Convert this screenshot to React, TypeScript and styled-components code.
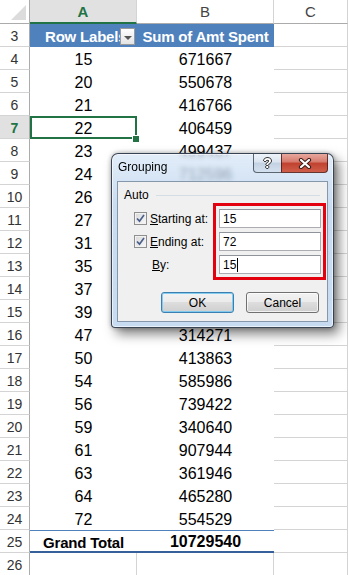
import React from "react";
import styled, { createGlobalStyle, css } from "styled-components";

const GlobalStyle = createGlobalStyle`
  html, body {
    margin: 0;
    padding: 0;
    background: #fff;
  }
  body {
    font-family: "Liberation Sans", Arial, sans-serif;
    overflow: hidden;
  }
  * {
    box-sizing: border-box;
  }
`;

const COLS = "30px 107px 137px 1fr";
const GRID = "#d4d4d4";
const HEAD_LINE = "#ababab";
const GREEN = "#217346";
const PIVOT_BLUE = "#4f81bd";

type Kind = "grid" | "pivot" | "head" | "total";

const Sheet = styled.div`
  position: relative;
  width: 348px;
  height: 575px;
  overflow: hidden;
  background: #fff;
`;

const HeaderRow = styled.div`
  display: grid;
  grid-template-columns: ${COLS};
  height: 24px;
`;

const Corner = styled.div`
  display: flex;
  align-items: flex-end;
  justify-content: flex-end;
  padding: 0 3px 3px 0;
  border-right: 1px solid ${HEAD_LINE};
  border-bottom: 1px solid ${HEAD_LINE};
  &::after {
    content: "";
    border-left: 15px solid transparent;
    border-bottom: 15px solid #dcdcdc;
  }
`;

const ColHead = styled.div<{ $active?: boolean }>`
  display: flex;
  align-items: center;
  justify-content: center;
  font-size: 15px;
  color: #444;
  border-right: 1px solid ${GRID};
  border-bottom: 1px solid ${HEAD_LINE};
  ${(p) =>
    p.$active &&
    css`
      background: #e1e1e1;
      color: ${GREEN};
      font-weight: bold;
      border-bottom: 2px solid ${GREEN};
    `}
`;

const Row = styled.div`
  display: grid;
  grid-template-columns: ${COLS};
  height: 23px;
`;

const RowNum = styled.div<{ $active?: boolean }>`
  display: flex;
  align-items: center;
  justify-content: center;
  padding-top: 1px;
  font-size: 14px;
  color: #333;
  border-right: 1px solid ${HEAD_LINE};
  border-bottom: 1px solid ${GRID};
  ${(p) =>
    p.$active &&
    css`
      background: #e1e1e1;
      color: ${GREEN};
      font-weight: bold;
    `}
`;

const Cell = styled.div<{ $kind?: Kind; $selected?: boolean }>`
  position: relative;
  display: flex;
  align-items: center;
  justify-content: center;
  padding-top: 2px;
  font-size: 16px;
  color: #000;
  white-space: nowrap;
  background: #fff;
  ${(p) =>
    p.$kind === "grid" &&
    css`
      border-right: 1px solid ${GRID};
      border-bottom: 1px solid ${GRID};
    `}
  ${(p) =>
    p.$kind === "head" &&
    css`
      background: ${PIVOT_BLUE};
      color: #fff;
      font-weight: bold;
      font-size: 15px;
      letter-spacing: -0.2px;
      overflow: hidden;
    `}
  ${(p) =>
    p.$kind === "total" &&
    css`
      font-weight: bold;
      border-top: 1px solid ${PIVOT_BLUE};
      border-bottom: 2px solid #36609a;
    `}
  ${(p) =>
    p.$selected &&
    css`
      z-index: 2;
      overflow: visible;
      &::after {
        content: "";
        position: absolute;
        inset: 0;
        border: 2px solid ${GREEN};
      }
      &::before {
        content: "";
        position: absolute;
        right: -3px;
        bottom: -4px;
        width: 6px;
        height: 6px;
        background: ${GREEN};
        border: 1px solid #fff;
        z-index: 3;
      }
    `}
`;

const TotalLabel = styled.span`
  font-size: 15px;
  letter-spacing: -0.2px;
`;

const HeadLabel = styled.span`
  flex: 1;
  padding-left: 15px;
  text-align: left;
`;

const FilterButton = styled.span`
  position: absolute;
  right: 2px;
  top: 4px;
  width: 15px;
  height: 17px;
  display: flex;
  align-items: center;
  justify-content: center;
  border: 1px solid #9a9a9a;
  background: linear-gradient(180deg, #ffffff, #e4e4e4);
  &::after {
    content: "";
    border-left: 4px solid transparent;
    border-right: 4px solid transparent;
    border-top: 4px solid #555;
    margin-top: 2px;
  }
`;

/* ---------- Grouping dialog ---------- */

const Dialog = styled.div`
  position: absolute;
  left: 111px;
  top: 153px;
  width: 223px;
  height: 175px;
  z-index: 10;
  display: flex;
  flex-direction: column;
  border: 1px solid rgba(30, 40, 55, 0.85);
  border-radius: 7px 7px 4px 4px;
  background: linear-gradient(
    180deg,
    rgba(214, 229, 246, 0.7),
    rgba(186, 210, 237, 0.78) 30%,
    rgba(190, 213, 239, 0.86)
  );
  backdrop-filter: blur(2.5px);
  box-shadow: inset 0 0 0 1px rgba(255, 255, 255, 0.6),
    5px 6px 12px rgba(0, 0, 0, 0.5), 0 0 5px rgba(0, 0, 0, 0.3);
  font-family: "Liberation Sans", Arial, sans-serif;
  font-size: 12px;
  color: #000;
`;

const TitleBar = styled.div`
  display: flex;
  align-items: flex-start;
  height: 27px;
`;

const Title = styled.span`
  flex: 1;
  padding-left: 6px;
  line-height: 27px;
`;

const CaptionButtons = styled.div`
  display: flex;
  margin-right: 5px;
`;

const HelpButton = styled.span`
  width: 28px;
  height: 19px;
  display: flex;
  align-items: center;
  justify-content: center;
  border: 1px solid rgba(45, 55, 70, 0.75);
  border-top: none;
  border-right: none;
  border-radius: 0 0 0 4px;
  background: linear-gradient(
    180deg,
    #eef3f9,
    #dae4ef 45%,
    #c3d2e3 50%,
    #d3e0ee
  );
  font-weight: bold;
  font-size: 14px;
  color: #fff;
  text-shadow: 1px 0 0 #333, -1px 0 0 #333, 0 1px 0 #333, 0 -1px 0 #333;
`;

const CloseButton = styled.span`
  width: 47px;
  height: 19px;
  display: flex;
  align-items: center;
  justify-content: center;
  border: 1px solid rgba(70, 25, 20, 0.8);
  border-top: none;
  border-radius: 0 0 4px 0;
  background: linear-gradient(
    180deg,
    #e7a79d,
    #d67a6c 45%,
    #c0412f 50%,
    #cf5e4a
  );
`;

const Client = styled.div`
  flex: 1;
  margin: 0 5px 5px;
  border: 1px solid #8797ab;
  background: #f0f0f0;
  display: flex;
  flex-direction: column;
`;

const GroupHead = styled.div`
  display: flex;
  align-items: center;
  height: 14px;
  margin-top: 6px;
  padding: 0 7px 0 6px;
  &::after {
    content: "";
    flex: 1;
    height: 1px;
    margin-left: 7px;
    background: #d5dde5;
  }
`;

const Fields = styled.div`
  position: relative;
  display: grid;
  row-gap: 4px;
  margin-top: 7px;
  padding: 0 6px 0 16px;
`;

const FieldRow = styled.div`
  display: grid;
  grid-template-columns: 13px 1fr 102px;
  align-items: center;
  height: 19px;
`;

const CheckBox = styled.span`
  width: 13px;
  height: 13px;
  display: flex;
  align-items: center;
  justify-content: center;
  border: 1px solid #8e8f8f;
  background: linear-gradient(135deg, #d8d8d8, #f8f8f8);
  box-shadow: inset 0 0 0 1px #f2f2f2;
`;

const FieldLabel = styled.span<{ $indent?: number }>`
  margin-left: ${(p) => p.$indent ?? 3}px;
  padding-top: 1px;
`;

const TextBox = styled.div`
  height: 19px;
  display: flex;
  align-items: center;
  padding-left: 3px;
  border: 1px solid #abadb3;
  border-top-color: #8f939a;
  background: #fff;
`;

const Caret = styled.span`
  display: inline-block;
  width: 1px;
  height: 14px;
  margin-left: 1px;
  background: #000;
`;

const Highlight = styled.div`
  position: absolute;
  left: 95px;
  top: -6px;
  width: 113px;
  height: 77px;
  border: 3px solid #e3000f;
  pointer-events: none;
`;

const ButtonRow = styled.div`
  display: flex;
  justify-content: flex-end;
  gap: 12px;
  margin-top: 18px;
  padding-right: 8px;
`;

const Button = styled.button<{ $default?: boolean }>`
  width: 73px;
  height: 21px;
  padding: 0;
  border: 1px solid ${(p) => (p.$default ? "#3c7fb1" : "#707070")};
  border-radius: 3px;
  background: linear-gradient(180deg, #f2f2f2, #ebebeb 50%, #dddddd 50%, #cfcfcf);
  box-shadow: inset 0 0 0 1px
    ${(p) => (p.$default ? "rgba(120, 200, 240, 0.9)" : "rgba(255, 255, 255, 0.7)")};
  font-family: "Liberation Sans", Arial, sans-serif;
  font-size: 12px;
  color: #000;
`;

const CheckMark = () => (
  <svg width="9" height="9" viewBox="0 0 9 9">
    <path
      d="M1 4.5 L3.5 7.2 L8 1"
      fill="none"
      stroke="#4a5f8c"
      strokeWidth="1.7"
    />
  </svg>
);

const CloseGlyph = () => (
  <svg width="14" height="11" viewBox="0 0 14 11">
    <path
      d="M3 2 L11 9 M11 2 L3 9"
      stroke="#3b1b16"
      strokeWidth="4.2"
      strokeLinecap="round"
    />
    <path
      d="M3 2 L11 9 M11 2 L3 9"
      stroke="#fff"
      strokeWidth="2.2"
      strokeLinecap="round"
    />
  </svg>
);

const data: [string, string][] = [
  ["15", "671667"],
  ["20", "550678"],
  ["21", "416766"],
  ["22", "406459"],
  ["23", "499437"],
  ["24", "712596"],
  ["26", "384215"],
  ["27", "455870"],
  ["31", "602341"],
  ["35", "398112"],
  ["37", "521743"],
  ["39", "425775"],
  ["47", "314271"],
  ["50", "413863"],
  ["54", "585986"],
  ["56", "739422"],
  ["59", "340640"],
  ["61", "907944"],
  ["63", "361946"],
  ["64", "465280"],
  ["72", "554529"],
];

const SELECTED_ROW = 7;

const App = () => {
  return (
    <Sheet>
      <GlobalStyle />
      <HeaderRow>
        <Corner />
        <ColHead $active>A</ColHead>
        <ColHead>B</ColHead>
        <ColHead>C</ColHead>
      </HeaderRow>

      <Row>
        <RowNum>3</RowNum>
        <Cell $kind="head">
          <HeadLabel>Row Labels</HeadLabel>
          <FilterButton />
        </Cell>
        <Cell $kind="head">Sum of Amt Spent</Cell>
        <Cell $kind="grid" />
      </Row>

      {data.map(([label, amount], i) => {
        const n = i + 4;
        return (
          <Row key={n}>
            <RowNum $active={n === SELECTED_ROW}>{n}</RowNum>
            <Cell $kind="pivot" $selected={n === SELECTED_ROW}>
              {label}
            </Cell>
            <Cell $kind="pivot">{amount}</Cell>
            <Cell $kind="grid" />
          </Row>
        );
      })}

      <Row>
        <RowNum>25</RowNum>
        <Cell $kind="total">
          <TotalLabel>Grand Total</TotalLabel>
        </Cell>
        <Cell $kind="total">10729540</Cell>
        <Cell $kind="grid" />
      </Row>
      <Row>
        <RowNum>26</RowNum>
        <Cell $kind="grid" />
        <Cell $kind="grid" />
        <Cell $kind="grid" />
      </Row>

      <Dialog>
        <TitleBar>
          <Title>Grouping</Title>
          <CaptionButtons>
            <HelpButton>?</HelpButton>
            <CloseButton>
              <CloseGlyph />
            </CloseButton>
          </CaptionButtons>
        </TitleBar>
        <Client>
          <GroupHead>Auto</GroupHead>
          <Fields>
            <FieldRow>
              <CheckBox>
                <CheckMark />
              </CheckBox>
              <FieldLabel>
                <u>S</u>tarting at:
              </FieldLabel>
              <TextBox>15</TextBox>
            </FieldRow>
            <FieldRow>
              <CheckBox>
                <CheckMark />
              </CheckBox>
              <FieldLabel>
                <u>E</u>nding at:
              </FieldLabel>
              <TextBox>72</TextBox>
            </FieldRow>
            <FieldRow>
              <span />
              <FieldLabel $indent={5}>
                <u>B</u>y:
              </FieldLabel>
              <TextBox>
                15
                <Caret />
              </TextBox>
            </FieldRow>
            <Highlight />
          </Fields>
          <ButtonRow>
            <Button $default>OK</Button>
            <Button>Cancel</Button>
          </ButtonRow>
        </Client>
      </Dialog>
    </Sheet>
  );
};

export default App;
